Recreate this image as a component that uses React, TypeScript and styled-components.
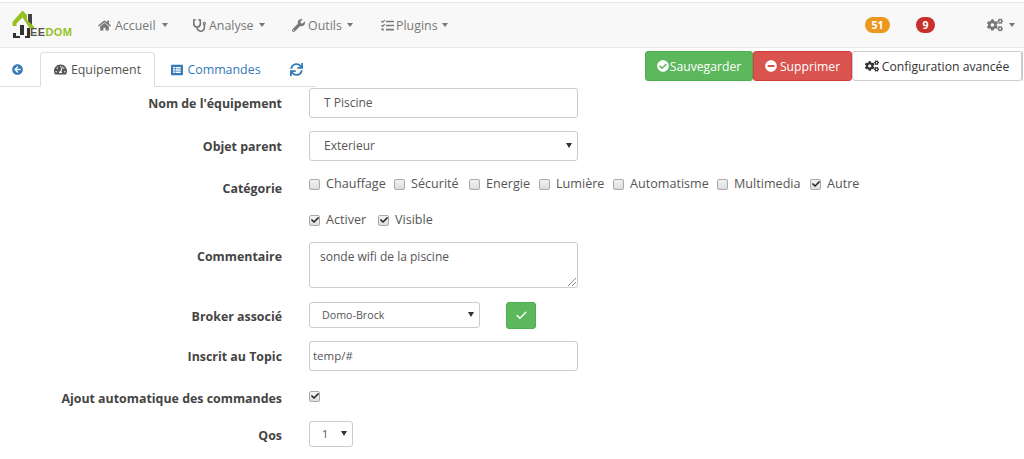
import React from 'react';
import styled, { createGlobalStyle } from 'styled-components';
import { FaHome, FaStethoscope, FaWrench, FaTasks, FaCogs, FaArrowCircleLeft, FaTachometerAlt, FaListAlt, FaSync, FaCheckCircle, FaMinusCircle, FaCheck } from 'react-icons/fa';
import { Check as ThinCheck } from 'lucide-react';

const Global = createGlobalStyle`
  html, body { margin: 0; padding: 0; background: #fff; overflow: hidden; }
  body { font-family: "Open Sans", "Liberation Sans", sans-serif; font-size: 12.4px; color: #555; }
  * { box-sizing: border-box; }
`;
const Page = styled.div`width:1024px;height:459px;overflow:hidden;`;
const NavBar = styled.div`height:46px;margin-top:2px;background:#f8f8f8;border-top:1px solid #e7e7e7;border-bottom:1px solid #e7e7e7;display:flex;align-items:center;padding-left:12px;`;
const Logo = styled.div`width:62px;height:30px;position:relative;margin-right:24px;margin-top:-1px;flex:none;`;
const LogoText = styled.span`position:absolute;left:18px;top:16px;font:700 11px "Liberation Sans",sans-serif;color:#94c11f;letter-spacing:.4px;`;
const LogoDark = styled.span`color:#555;`;
const NavItem = styled.div<{ $w: number; $gap?: number }>`display:flex;align-items:center;gap:${p => p.$gap ?? 3}px;width:${p => p.$w}px;color:#777;font-size:12.4px;flex:none;`;
const Caret = styled.i`display:inline-block;width:0;height:0;border-top:4px solid currentColor;border-left:3.5px solid transparent;border-right:3.5px solid transparent;margin-left:2px;`;
const Spacer = styled.div`flex:1;`;
const Badge = styled.span<{ $bg: string; $w: number }>`display:block;background:${p => p.$bg};color:#fff;font-weight:700;font-size:10.5px;width:${p => p.$w}px;height:16px;line-height:16px;text-align:center;border-radius:8px;flex:none;`;
const TabBar = styled.div`height:39px;padding:4px 0 0 12px;display:flex;position:relative;`;
const TabLine = styled.div`position:absolute;left:0;bottom:0;width:316px;height:1px;background:#ddd;`;
const Tab = styled.div<{ $active?: boolean; $w: number }>`position:relative;z-index:1;display:flex;align-items:center;justify-content:center;gap:4px;width:${p => p.$w}px;height:35px;flex:none;color:${p => p.$active ? '#555' : '#337ab7'};font-size:12.4px;${p => p.$active ? 'background:#fff;border:1px solid #ddd;border-bottom:1px solid #fff;border-radius:4px 4px 0 0;' : ''}`;
const Actions = styled.div`position:absolute;right:0;top:3px;display:flex;z-index:2;`;
const Btn = styled.div<{ $bg: string; $c: string; $b: string; $w: number; $gap: number }>`height:30px;width:${p => p.$w}px;background:${p => p.$bg};color:${p => p.$c};border:1px solid ${p => p.$b};border-radius:3px;display:flex;align-items:center;justify-content:center;gap:${p => p.$gap}px;font-size:12.2px;`;
const ClippedBtn = styled.div`width:2px;height:30px;background:#fff;border-left:1px solid #ccc;`;
const Form = styled.div`display:flex;flex-direction:column;margin-top:1px;`;
const Row = styled.div<{ $h: number }>`display:flex;height:${p => p.$h}px;`;
const Label = styled.div<{ $top?: number }>`width:282px;padding-top:${p => p.$top ?? 0}px;text-align:right;font-weight:700;color:#444;font-size:12.4px;line-height:18px;flex:none;`;
const Field = styled.div`margin-left:27px;display:flex;`;
const Input = styled.div<{ $w: number; $h: number; $fs?: number; $pl?: number; $pt?: number }>`width:${p => p.$w}px;height:${p => p.$h}px;border:1px solid #ccc;border-radius:3px;padding:${p => p.$pt ?? 6}px ${p => p.$pl ?? 14}px;font-size:${p => p.$fs ?? 12}px;color:#555;background:#fff;position:relative;line-height:16px;display:flex;`;
const SelectCaret = styled.i`position:absolute;right:5px;top:50%;margin-top:-3px;width:0;height:0;border-top:5px solid #333;border-left:3px solid transparent;border-right:3px solid transparent;`;
const Handle = styled.svg`position:absolute;right:1px;bottom:1px;`;
const CheckRow = styled.div<{ $top?: number }>`display:flex;align-items:center;height:18px;margin-top:${p => p.$top ?? 0}px;`;
const CheckLabel = styled.span<{ $w?: number }>`display:flex;align-items:center;gap:6px;font-size:12.6px;color:#555;${p => p.$w ? `width:${p.$w}px;` : ''}`;
const Box = styled.span`width:11px;height:11px;margin-top:2px;display:inline-flex;align-items:center;justify-content:center;border:1px solid #aaa;background:linear-gradient(#f2f2f2,#dedede);border-radius:2px;color:#222;flex:none;`;
const ConfirmBtn = styled.div`width:30px;height:27px;background:#5cb85c;border:1px solid #4cae4c;border-radius:3px;color:#fff;display:flex;align-items:center;justify-content:center;margin-left:26px;`;

const Check = ({ label, on, w }: { label?: string; on?: boolean; w?: number }) => (
  <CheckLabel $w={w}><Box>{on && <FaCheck size={8} />}</Box>{label}</CheckLabel>
);

export default function App() {
  return (
    <Page>
      <Global />
      <NavBar>
        <Logo>
          <svg width="24" height="30" viewBox="0 0 24 30">
            <path d="M0.500 12 L10.500 0.500 L15 5 L15 10 L22 16.500 L22 18 L17.500 18 L10.500 7.500 L4.500 13.500 L4.500 16 L0.500 16 Z" fill="#94c11f" />
            <path d="M16 4h4v11l-4-4z" fill="#444" />
            <path d="M8 15h4v10h-4zM1 23h3v3h4v2H1zM15 18h3v10h-5v-2h2z" fill="#333" />
          </svg>
          <LogoText><LogoDark>EE</LogoDark>DOM</LogoText>
        </Logo>
        <NavItem $w={95} $gap={4}><FaHome size={13} />Accueil<Caret /></NavItem>
        <NavItem $w={99}><FaStethoscope size={13} />Analyse<Caret /></NavItem>
        <NavItem $w={89}><FaWrench size={13} />Outils<Caret /></NavItem>
        <NavItem $w={80} $gap={2}><FaTasks size={13} />Plugins<Caret /></NavItem>
        <Spacer />
        <Badge $bg="#ec971f" $w={25}>51</Badge>
        <Badge $bg="#c9302c" $w={19} style={{ marginLeft: 26 }}>9</Badge>
        <NavItem $w={37} $gap={4} style={{ marginLeft: 52 }}><FaCogs size={16} /><Caret /></NavItem>
      </NavBar>
      <TabBar>
        <TabLine />
        <Tab $w={28} style={{ justifyContent: 'flex-start' }}><FaArrowCircleLeft size={11} /></Tab>
        <Tab $active $w={115}><FaTachometerAlt size={13} />Equipement</Tab>
        <Tab $w={122}><FaListAlt size={12} />Commandes</Tab>
        <Tab $w={38}><FaSync size={13} /></Tab>
        <Actions>
          <Btn $bg="#5cb85c" $c="#fff" $b="#4cae4c" $w={108} $gap={1}><FaCheckCircle size={12} />Sauvegarder</Btn>
          <Btn $bg="#d9534f" $c="#fff" $b="#d43f3a" $w={99} $gap={3}><FaMinusCircle size={12} />Supprimer</Btn>
          <Btn $bg="#fff" $c="#333" $b="#ccc" $w={170} $gap={3}><FaCogs size={14} />Configuration avancée</Btn>
          <ClippedBtn />
        </Actions>
      </TabBar>
      <Form>
        <Row $h={43}>
          <Label $top={7}>Nom de l'équipement</Label>
          <Field><Input $w={269} $h={30}>T Piscine</Input></Field>
        </Row>
        <Row $h={43}>
          <Label $top={7}>Objet parent</Label>
          <Field><Input $w={269} $h={30}>Exterieur<SelectCaret /></Input></Field>
        </Row>
        <Row $h={36}>
          <Label $top={6}>Catégorie</Label>
          <Field>
            <CheckRow>
              <Check label="Chauffage" w={85} />
              <Check label="Sécurité" w={75} />
              <Check label="Energie" w={70} />
              <Check label="Lumière" w={74} />
              <Check label="Automatisme" w={104} />
              <Check label="Multimedia" w={93} />
              <Check label="Autre" on />
            </CheckRow>
          </Field>
        </Row>
        <Row $h={32}>
          <Label />
          <Field>
            <CheckRow>
              <Check label="Activer" on w={69} />
              <Check label="Visible" on />
            </CheckRow>
          </Field>
        </Row>
        <Row $h={60}>
          <Label $top={6}>Commentaire</Label>
          <Field>
            <Input $w={269} $h={46} $pl={10}>
              sonde wifi de la piscine
              <Handle width="9" height="9" viewBox="0 0 9 9"><path d="M1 9 L9 1 M5 9 L9 5" stroke="#888" fill="none" /></Handle>
            </Input>
          </Field>
        </Row>
        <Row $h={39}>
          <Label $top={6}>Broker associé</Label>
          <Field>
            <Input $w={171} $h={26} $fs={10.7} $pl={12} $pt={4}>Domo-Brock<SelectCaret /></Input>
            <ConfirmBtn><ThinCheck size={13} strokeWidth={2.5} /></ConfirmBtn>
          </Field>
        </Row>
        <Row $h={42}>
          <Label $top={7}>Inscrit au Topic</Label>
          <Field><Input $w={269} $h={30} $fs={11.5} $pl={3}>temp/#</Input></Field>
        </Row>
        <Row $h={38}>
          <Label $top={7}>Ajout automatique des commandes</Label>
          <Field><CheckRow $top={3}><Check on /></CheckRow></Field>
        </Row>
        <Row $h={30}>
          <Label $top={6}>Qos</Label>
          <Field><Input $w={44} $h={26} $fs={11} $pl={12} $pt={4}>1<SelectCaret /></Input></Field>
        </Row>
      </Form>
    </Page>
  );
}
